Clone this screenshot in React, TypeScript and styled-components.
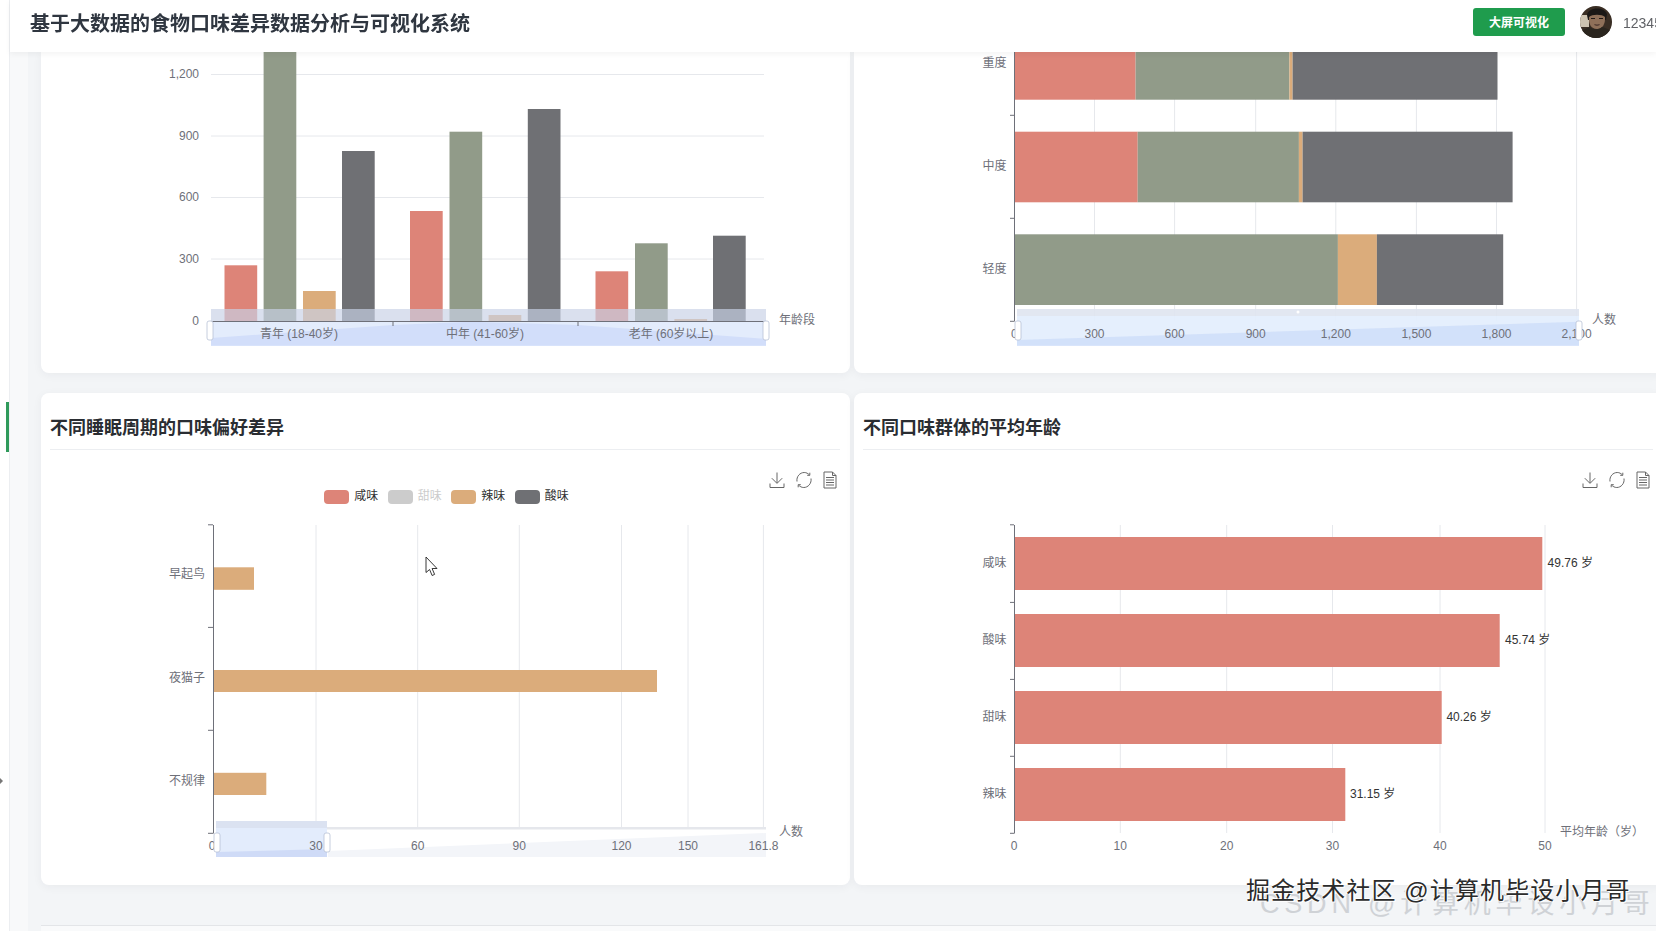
import React from 'react';
import styled, { createGlobalStyle } from 'styled-components';

const FONT = '"Liberation Sans", "Noto Sans CJK SC", sans-serif';
const SALTY = '#dd8478';
const SAGE = '#919b89';
const TAN = '#dbac7b';
const DARK = '#6f7074';
const AXIS = '#6e7079';
const GRID = '#e6e8ec';

const GlobalStyle = createGlobalStyle`
    html, body {
        margin: 0;
        padding: 0;
        background: #fff;
        font-family: ${FONT};
    }
`;

const Page = styled('div')`
    position: relative;
    display: flex;
    width: 1656px;
    height: 931px;
    overflow: hidden;
    filter: blur(0.25px);
`;

const Sidebar = styled('aside')`
    flex: 0 0 10px;
    box-sizing: border-box;
    display: flex;
    flex-direction: column;
    align-items: flex-start;
    background: #fff;
    border-right: 1px solid #eceef1;
`;

const ActiveMarker = styled('div')`
    width: 3px;
    height: 50px;
    margin: 402px 0 0 6px;
    background: #2f9a5b;
`;

const CollapseArrow = styled('div')`
    width: 0;
    height: 0;
    margin-top: 326px;
    border-left: 3px solid #777;
    border-top: 3px solid transparent;
    border-bottom: 3px solid transparent;
`;

const Main = styled('div')`
    flex: 1;
    min-width: 0;
    display: flex;
    flex-direction: column;
`;

const Header = styled('header')`
    position: relative;
    z-index: 2;
    flex: 0 0 52px;
    display: flex;
    align-items: center;
    justify-content: space-between;
    padding-left: 20px;
    background: #fff;
    box-shadow: 0 2px 6px rgba(0, 0, 0, 0.05);
`;

const Title = styled('h1')`
    margin: 0 0 7px;
    font-size: 20px;
    font-weight: 700;
    color: #2f3640;
`;

const UserArea = styled('div')`
    flex: 0 0 183px;
    display: flex;
    align-items: center;
    margin-bottom: 8px;
    overflow: hidden;
`;

const ScreenButton = styled('button')`
    flex: 0 0 92px;
    height: 28px;
    padding: 0 0 2px;
    border: none;
    border-radius: 3px;
    background: #1f9c4d;
    color: #fff;
    font-family: ${FONT};
    font-size: 12px;
    font-weight: 700;
`;

const Avatar = styled('svg')`
    flex: 0 0 32px;
    margin-left: 15px;
`;

const UserName = styled('span')`
    margin: 2px 0 0 11px;
    font-size: 14px;
    color: #606266;
    white-space: nowrap;
`;

const Body = styled('div')`
    flex: 1;
    min-height: 0;
    display: flex;
`;

const Gutter = styled('div')`
    flex: 0 0 18px;
    background: #f8f9fa;
`;

const Content = styled('main')`
    flex: 1;
    min-width: 0;
    display: flex;
    flex-direction: column;
    padding-left: 13px;
    background: #f3f5f7;
    overflow: hidden;
`;

const CardGrid = styled('div')`
    display: grid;
    grid-template-columns: 809px 809px;
    grid-template-rows: 321px 492px;
    column-gap: 4px;
    row-gap: 20px;
`;

const Card = styled('section')<{ $cut?: boolean }>`
    display: flex;
    flex-direction: column;
    overflow: hidden;
    background: #fff;
    border-radius: ${({ $cut }) => ($cut ? '0 0 8px 8px' : '8px')};
    box-shadow: 0 2px 10px rgba(30, 40, 60, 0.05);
`;

const CardHeader = styled('div')`
    flex: 0 0 45px;
    display: flex;
    align-items: center;
    margin: 12px 10px 0 9px;
    padding-bottom: 3px;
    box-sizing: border-box;
    border-bottom: 1px solid #eceef1;
`;

const CardTitle = styled('h3')`
    margin: 0;
    font-size: 18px;
    font-weight: 700;
    color: #2a2d32;
`;

const Toolbox = styled('div')`
    flex: 0 0 18px;
    display: flex;
    justify-content: flex-end;
    gap: 8.5px;
    margin-top: 21px;
    padding-right: 11px;
`;

const ToolIcon = styled('svg')`
    width: 18px;
    height: 18px;
    fill: none;
    stroke: #666;
    stroke-width: 1;
`;

const Legend = styled('div')`
    flex: 0 0 15px;
    display: flex;
    justify-content: center;
    align-items: center;
    gap: 9.5px;
    padding-left: 2px;
    line-height: 15px;
`;

const LegendItem = styled('div')<{ $off?: boolean }>`
    display: flex;
    align-items: center;
    gap: 5px;
    font-size: 12px;
    color: ${({ $off }) => ($off ? '#ccc' : '#333')};
`;

const Swatch = styled('span')<{ $color: string }>`
    width: 25px;
    height: 14px;
    border-radius: 4px;
    background: ${({ $color }) => $color};
`;

const ChartSvg = styled('svg')`
    display: block;
    flex: none;
`;

const AxisText = styled('text')`
    font-family: ${FONT};
    font-size: 12px;
    fill: ${AXIS};
    dominant-baseline: central;
`;

const ValueText = styled(AxisText)`
    fill: #333;
`;

const Footer = styled('div')`
    flex: 1;
    margin-top: 40px;
    border-top: 1px solid #e3e5e8;
    background: #f9fafb;
`;

const Watermark = styled('div')`
    position: absolute;
    left: 1246px;
    top: 876px;
    font-size: 24px;
    letter-spacing: 1.1px;
    line-height: 30px;
    color: #2b2b2b;
    white-space: nowrap;
    text-shadow: 1px 1px 0 #fff, -1px 0 0 #fff, 0 -1px 0 #fff;
`;

const WatermarkBack = styled('div')`
    position: absolute;
    left: 1260px;
    top: 889px;
    font-size: 27px;
    letter-spacing: 4.8px;
    line-height: 30px;
    color: #cfd2d6;
    white-space: nowrap;
`;

const Line: React.FC<{ x1: number; y1: number; x2: number; y2: number; c?: string }> = ({
    x1,
    y1,
    x2,
    y2,
    c = AXIS,
}) => <line x1={x1} y1={y1} x2={x2} y2={y2} stroke={c} strokeWidth={1} />;

const Bar: React.FC<{ x1: number; y1: number; x2: number; y2: number; c: string }> = ({
    x1,
    y1,
    x2,
    y2,
    c,
}) => <rect x={x1} y={y1} width={x2 - x1} height={y2 - y1} fill={c} />;

const Handle: React.FC<{ x: number; y1: number; y2: number }> = ({ x, y1, y2 }) => (
    <rect
        x={x - 3}
        y={y1}
        width={6}
        height={y2 - y1}
        rx={2}
        fill="#fff"
        stroke="#b8c2d6"
        strokeWidth={0.8}
    />
);

const DownloadIcon = () => (
    <ToolIcon viewBox="0 0 18 18">
        <path d="M9 1.5v10.5M3.8 7.2 9 12.4l5.2-5.2M2 12.5v4h14v-4" />
    </ToolIcon>
);

const RefreshIcon = () => (
    <ToolIcon viewBox="0 0 18 18">
        <path d="M2 10.5C1.2 5.5 5 1.5 9.2 1.5c2.2 0 3.9 1 5.2 2.5M16 7.5c.8 5-3 9-7.2 9-2.2 0-3.9-1-5.2-2.5" />
        <path d="M12.2 4.3h2.6V1.7M5.8 13.7H3.2v2.6" />
    </ToolIcon>
);

const DocIcon = () => (
    <ToolIcon viewBox="0 0 18 18">
        <path d="M3 1h8.5L15 4.500V17H3zM11.5 1v3.500H15M5 6.500h8M5 9h8M5 11.500h8M5 14h8" />
    </ToolIcon>
);

const Tools = () => (
    <Toolbox>
        <DownloadIcon />
        <RefreshIcon />
        <DocIcon />
    </Toolbox>
);

const AgeChart = () => {
    const groups = [
        { x: [224.5, 263.6, 303, 342], tops: [265.3, 50, 291, 151] },
        { x: [410, 449.5, 488.6, 527.8], tops: [211, 131.7, 315, 109] },
        { x: [595.5, 635, 674.4, 713], tops: [271.3, 243.3, 319, 235.7] },
    ];
    const colors = [SALTY, SAGE, TAN, DARK];
    const yTicks = [
        ['1,200', 74],
        ['900', 135.5],
        ['600', 197],
        ['300', 258.5],
        ['0', 320.5],
    ] as const;
    return (
        <ChartSvg width={809} height={321} viewBox="41 52 809 321">
            {yTicks.slice(0, 4).map(([, y]) => (
                <Line key={y} x1={211} y1={y + 0.5} x2={764} y2={y + 0.5} c={GRID} />
            ))}
            {groups.map((g) =>
                g.x.map((x, i) => (
                    <Bar key={x} x1={x} y1={g.tops[i]} x2={x + 32.7} y2={321} c={colors[i]} />
                )),
            )}
            <rect x={211} y={309} width={555} height={12.5} fill="#c9d2e6" opacity={0.68} />
            <rect x={211} y={321} width={555} height={24.7} fill="#e3ecfc" />
            <polygon
                points="211,338 393,325 471,321.7 578,325 766,339 766,345.7 211,345.7"
                fill="#d2defa"
            />
            <Line x1={211} y1={321.5} x2={764} y2={321.5} />
            {[211, 393, 578, 764].map((x) => (
                <Line key={x} x1={x} y1={321} x2={x} y2={326} />
            ))}
            <Handle x={210} y1={321} y2={340} />
            <Handle x={766} y1={321} y2={340} />
            {yTicks.map(([t, y]) => (
                <AxisText key={t} x={199} y={y} textAnchor="end">
                    {t}
                </AxisText>
            ))}
            <AxisText x={299} y={333.5} textAnchor="middle">
                青年 (18-40岁)
            </AxisText>
            <AxisText x={485} y={333.5} textAnchor="middle">
                中年 (41-60岁)
            </AxisText>
            <AxisText x={671} y={333.5} textAnchor="middle">
                老年 (60岁以上)
            </AxisText>
            <AxisText x={779} y={319.5}>年龄段</AxisText>
        </ChartSvg>
    );
};

const SeverityChart = () => {
    const rows: { y1: number; y2: number; stops: [number, string][] }[] = [
        {
            y1: 50,
            y2: 99.7,
            stops: [
                [1135.6, SALTY],
                [1289.4, SAGE],
                [1292.6, TAN],
                [1497.5, DARK],
            ],
        },
        {
            y1: 131.7,
            y2: 202.3,
            stops: [
                [1137.7, SALTY],
                [1298.9, SAGE],
                [1302.6, TAN],
                [1512.6, DARK],
            ],
        },
        {
            y1: 234.3,
            y2: 305,
            stops: [
                [1337.9, SAGE],
                [1376.9, TAN],
                [1503.2, DARK],
            ],
        },
    ];
    const ticks: [string, number][] = [
        ['0', 1014.4],
        ['300', 1094.5],
        ['600', 1174.6],
        ['900', 1255.7],
        ['1,200', 1335.8],
        ['1,500', 1416.4],
        ['1,800', 1496.5],
        ['2,100', 1576.6],
    ];
    return (
        <ChartSvg width={809} height={321} viewBox="854 52 809 321">
            {ticks.slice(1).map(([t, x]) => (
                <Line key={t} x1={x} y1={52} x2={x} y2={321} c={GRID} />
            ))}
            {rows.map((r) =>
                r.stops.map(([end, c], i) => (
                    <Bar
                        key={end}
                        x1={i ? r.stops[i - 1][0] : 1014.4}
                        y1={r.y1}
                        x2={end}
                        y2={r.y2}
                        c={c}
                    />
                )),
            )}
            <Line x1={1014.5} y1={52} x2={1014.5} y2={321.5} />
            {[115.3, 218.3, 321.3].map((y) => (
                <Line key={y} x1={1010} y1={y} x2={1014} y2={y} />
            ))}
            <AxisText x={1006.5} y={62.5} textAnchor="end">重度</AxisText>
            <AxisText x={1006.5} y={165.7} textAnchor="end">中度</AxisText>
            <AxisText x={1006.5} y={268.5} textAnchor="end">轻度</AxisText>
            <rect x={1017} y={309} width={562} height={7} fill="#dfe4ef" opacity={0.9} />
            <rect x={1017} y={316} width={562} height={29.7} fill="#e3eefd" opacity={0.92} />
            <polygon points="1017,340 1579,321.7 1579,345.7 1017,345.7" fill="#cfdff9" opacity={0.9} />
            <circle cx={1298} cy={312} r={1.5} fill="#fff" />
            {ticks.map(([t, x]) => (
                <AxisText key={t} x={x} y={333.5} textAnchor="middle">
                    {t}
                </AxisText>
            ))}
            <AxisText x={1592} y={320}>人数</AxisText>
            <Handle x={1018} y1={321} y2={340} />
            <Handle x={1579} y1={321} y2={340} />
        </ChartSvg>
    );
};

const SleepChart = () => {
    const grid: [string, number][] = [
        ['0', 212],
        ['30', 316],
        ['60', 417.7],
        ['90', 519.3],
        ['120', 621.5],
        ['150', 688],
        ['161.8', 763.4],
    ];
    const rows: [string, number, number, number, number][] = [
        ['早起鸟', 574, 567.3, 589.8, 254],
        ['夜猫子', 678, 670, 692, 657],
        ['不规律', 780.5, 772.8, 795, 266.3],
    ];
    return (
        <ChartSvg width={809} height={381} viewBox="41 504 809 381">
            {grid.slice(1).map(([t, x]) => (
                <Line key={t} x1={x} y1={525} x2={x} y2={833} c={GRID} />
            ))}
            {rows.map(([t, , y1, y2, end]) => (
                <Bar key={t} x1={213} y1={y1} x2={end} y2={y2} c={TAN} />
            ))}
            <Line x1={213.5} y1={525} x2={213.5} y2={833.5} />
            {[524.8, 627.4, 730.3, 833.3].map((y) => (
                <Line key={y} x1={208} y1={y} x2={213} y2={y} />
            ))}
            {rows.map(([t, y]) => (
                <AxisText key={t} x={205} y={y} textAnchor="end">
                    {t}
                </AxisText>
            ))}
            <rect x={216} y={827} width={550} height={30} rx={2} fill="#fff" />
            <rect x={216} y={827} width={550} height={2.5} fill="#e5e7ec" />
            <polygon points="328,851 766,833 766,857 328,857" fill="#f3f5f9" />
            <rect x={216} y={821} width={111} height={7} fill="#dbe2f1" />
            <rect x={216} y={828} width={111} height={29} fill="#e3ecfc" />
            <polygon points="216,852 327,849 327,857 216,857" fill="#cfdbf7" />
            {grid.map(([t, x]) => (
                <AxisText key={t} x={x} y={845.6} textAnchor="middle">
                    {t}
                </AxisText>
            ))}
            <AxisText x={779} y={831.5}>人数</AxisText>
            <Handle x={217} y1={833} y2={852} />
            <Handle x={327} y1={833} y2={852} />
            <path
                d="M426 557v15.5l3.6-3 2.5 6 2.5-1.100-2.500-5.900h4.900z"
                fill="#fff"
                stroke="#222"
                strokeWidth={0.9}
            />
        </ChartSvg>
    );
};

const AverageAgeChart = () => {
    const rows: [string, number, number, number, number, string, number][] = [
        ['咸味', 562.7, 537, 590, 1542.3, '49.76 岁', 1547.6],
        ['酸味', 639.7, 614, 667, 1499.7, '45.74 岁', 1505],
        ['甜味', 716.6, 691, 744, 1441.7, '40.26 岁', 1446.4],
        ['辣味', 793.6, 768, 821, 1345.3, '31.15 岁', 1350],
    ];
    const grid: [string, number][] = [
        ['10', 1120.3],
        ['20', 1226.7],
        ['30', 1332.5],
        ['40', 1440],
        ['50', 1545],
    ];
    return (
        <ChartSvg width={809} height={381} viewBox="854 504 809 381">
            {grid.map(([t, x]) => (
                <Line key={t} x1={x} y1={525} x2={x} y2={833} c={GRID} />
            ))}
            {rows.map(([t, , y1, y2, end]) => (
                <Bar key={t} x1={1014.4} y1={y1} x2={end} y2={y2} c={SALTY} />
            ))}
            <Line x1={1014.5} y1={525} x2={1014.5} y2={833.5} />
            {[524.8, 602.4, 679.4, 756.3, 833.3].map((y) => (
                <Line key={y} x1={1010} y1={y} x2={1014} y2={y} />
            ))}
            {rows.map(([t, y, , , , value, vx]) => (
                <React.Fragment key={t}>
                    <AxisText x={1006.5} y={y} textAnchor="end">
                        {t}
                    </AxisText>
                    <ValueText x={vx} y={y}>
                        {value}
                    </ValueText>
                </React.Fragment>
            ))}
            <AxisText x={1014} y={845.6} textAnchor="middle">0</AxisText>
            {grid.map(([t, x]) => (
                <AxisText key={t} x={x} y={845.6} textAnchor="middle">
                    {t}
                </AxisText>
            ))}
            <AxisText x={1560} y={831.5}>平均年龄（岁）</AxisText>
        </ChartSvg>
    );
};

const UserPhoto = () => (
    <Avatar width={32} height={32} viewBox="0 0 32 32">
        <defs>
            <clipPath id="avatar-clip">
                <circle cx={16} cy={16} r={16} />
            </clipPath>
        </defs>
        <g clipPath="url(#avatar-clip)">
            <rect width={32} height={32} fill="#3a2e24" />
            <rect x={0} y={9} width={9} height={12} fill="#cdc3b1" />
            <path d="M7 9C8 1 24 0 27 8l-1 6H8z" fill="#1b1816" />
            <path d="M9 11c3-3 13-3 16 0 .5 7-2.500 12-8 12C11 23 8.500 18 9 11z" fill="#8f7059" />
            <path d="M11 12.500h4M19 12.500h4" stroke="#221a16" strokeWidth={1.2} />
            <path d="M14.500 18.500c1.500.8 3.500.8 5 0" stroke="#46302a" strokeWidth={1.2} fill="none" />
            <path d="M0 32v-6c4-3 8-4 10-5 3 3 9 3 12 0 3 1 7 2 10 5v6z" fill="#2a251e" />
        </g>
    </Avatar>
);

const App: React.FC = () => (
    <Page>
        <GlobalStyle />
        <Sidebar>
            <ActiveMarker />
            <CollapseArrow />
        </Sidebar>
        <Main>
            <Header>
                <Title>基于大数据的食物口味差异数据分析与可视化系统</Title>
                <UserArea>
                    <ScreenButton>大屏可视化</ScreenButton>
                    <UserPhoto />
                    <UserName>12345</UserName>
                </UserArea>
            </Header>
            <Body>
                <Gutter />
                <Content>
                    <CardGrid>
                        <Card $cut>
                            <AgeChart />
                        </Card>
                        <Card $cut>
                            <SeverityChart />
                        </Card>
                        <Card>
                            <CardHeader>
                                <CardTitle>不同睡眠周期的口味偏好差异</CardTitle>
                            </CardHeader>
                            <Tools />
                            <Legend>
                                <LegendItem>
                                    <Swatch $color={SALTY} />
                                    咸味
                                </LegendItem>
                                <LegendItem $off>
                                    <Swatch $color="#ccc" />
                                    甜味
                                </LegendItem>
                                <LegendItem>
                                    <Swatch $color={TAN} />
                                    辣味
                                </LegendItem>
                                <LegendItem>
                                    <Swatch $color={DARK} />
                                    酸味
                                </LegendItem>
                            </Legend>
                            <SleepChart />
                        </Card>
                        <Card>
                            <CardHeader>
                                <CardTitle>不同口味群体的平均年龄</CardTitle>
                            </CardHeader>
                            <Tools />
                            <Legend />
                            <AverageAgeChart />
                        </Card>
                    </CardGrid>
                    <Footer />
                </Content>
            </Body>
        </Main>
        <WatermarkBack>CSDN @计算机毕设小月哥</WatermarkBack>
        <Watermark>掘金技术社区 @计算机毕设小月哥</Watermark>
    </Page>
);

export default App;
